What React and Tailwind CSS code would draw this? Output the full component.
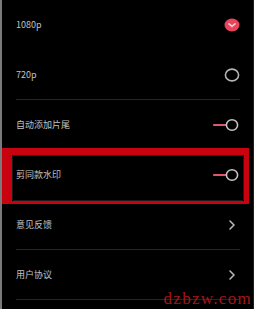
import React from "react";

const font = { fontFamily: '"Noto Sans CJK SC", "Noto Sans", sans-serif' };

function Check() {
  return (
    <svg width="16" height="14" viewBox="0 0 16 14">
      <ellipse cx="8" cy="7" rx="7.5" ry="6.5" fill="#e9445b" />
      <path d="M5 5.8 L8 8.4 L11 5.8" fill="none" stroke="#f6d0d5" strokeWidth="1.6" strokeLinecap="round" strokeLinejoin="round" />
    </svg>
  );
}

function Radio() {
  return (
    <svg width="16" height="14" viewBox="0 0 16 14">
      <ellipse cx="8" cy="7" rx="6.6" ry="5.9" fill="none" stroke="#b4b4b4" strokeWidth="1.6" />
    </svg>
  );
}

function Toggle() {
  return (
    <svg width="28" height="14" viewBox="0 0 28 14">
      <line x1="2" y1="7" x2="14" y2="7" stroke="#e0566a" strokeWidth="2.2" strokeLinecap="round" />
      <ellipse cx="20" cy="7" rx="5.6" ry="5.3" fill="none" stroke="#c4c4c4" strokeWidth="1.6" />
    </svg>
  );
}

function Chevron() {
  return (
    <svg width="16" height="14" viewBox="0 0 16 14">
      <path d="M6 3 L10 7 L6 11" fill="none" stroke="#b8b8b8" strokeWidth="1.6" strokeLinecap="round" strokeLinejoin="round" />
    </svg>
  );
}

function Row({ label, right, sep }) {
  return (
    <div
      className={`ml-[14px] mr-[13px] flex h-[50px] items-center justify-between border-b ${
        sep ? "border-[#262626]" : "border-transparent"
      }`}
    >
      <span className="text-[9px] leading-none text-[#c2c2c2]" style={font}>{label}</span>
      {right}
    </div>
  );
}

export default function App() {
  return (
    <div className="relative flex h-[309px] w-[254px] flex-col overflow-hidden border-l-2 border-r border-l-[#7a7a7a] border-r-[#1e1e1e] bg-black">
      <Row label="1080p" right={<Check />} />
      <Row label="720p" right={<Radio />} sep />
      <Row label="自动添加片尾" right={<Toggle />} />
      <Row label="剪同款水印" right={<Toggle />} />
      <Row label="意见反馈" right={<Chevron />} sep />
      <Row label="用户协议" right={<Chevron />} sep />

      {/* annotation box */}
      <div className="absolute left-[-2px] top-[148px] h-[56px] w-[249px] border-b-[3px] border-l-[12px] border-r-[5px] border-t-[7px] border-[#c8030f]">
        <div className="h-full w-full rounded-[2px] border border-[#1c1c1c]" />
      </div>

      {/* watermark */}
      <div
        className="absolute bottom-[2px] right-[1px] text-[17px] leading-none tracking-[1.3px] text-[#a3161a]"
        style={{ fontFamily: '"Liberation Serif", serif' }}
      >
        dzbzw.com
      </div>
    </div>
  );
}
